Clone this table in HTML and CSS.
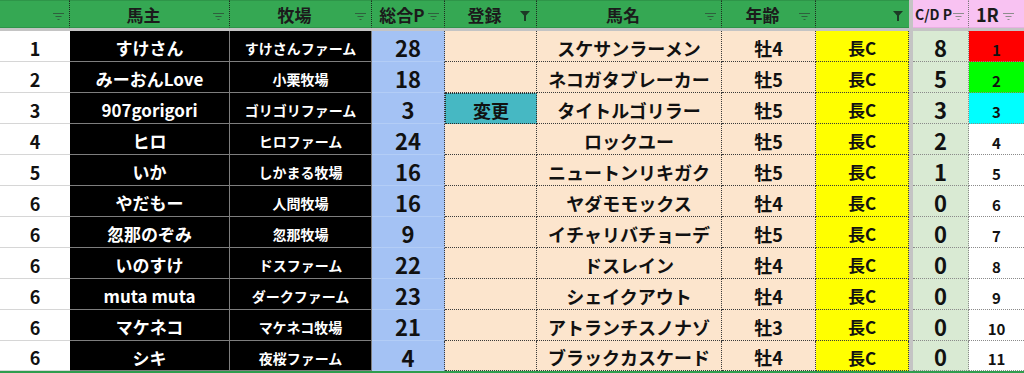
FILE: index.html
```html
<!DOCTYPE html>
<html lang="ja">
<head>
<meta charset="utf-8">
<title>Sheet</title>
<link rel="stylesheet" href="styles.css">
</head>
<body>
<div class="sheet">
  <div class="freeze-col"></div>
  <div class="freeze-row"></div>

  <div class="hd hd-a"><span class="lbl"></span><svg class="flt" width="11" height="7" viewBox="0 0 11 7"><path d="M0 .5h11M2.5 3.5h6M4.5 6.5h2" stroke="#2f5f3d"/></svg></div>
  <div class="hd"><span class="lbl">馬主</span><svg class="flt" width="11" height="7" viewBox="0 0 11 7"><path d="M0 .5h11M2.5 3.5h6M4.5 6.5h2" stroke="#2f5f3d"/></svg></div>
  <div class="hd"><span class="lbl">牧場</span><svg class="flt" width="11" height="7" viewBox="0 0 11 7"><path d="M0 .5h11M2.5 3.5h6M4.5 6.5h2" stroke="#2f5f3d"/></svg></div>
  <div class="hd hd-d"><span class="lbl">総合P</span><svg class="flt" width="11" height="7" viewBox="0 0 11 7"><path d="M0 .5h11M2.5 3.5h6M4.5 6.5h2" stroke="#2f5f3d"/></svg></div>
  <div class="hd"><span class="lbl">登録</span><svg class="fun" width="10" height="10" viewBox="0 0 10 10"><path d="M0 0h10L6 4.5V10H4V4.5Z" fill="#1c3a25"/></svg></div>
  <div class="hd"><span class="lbl">馬名</span><svg class="flt" width="11" height="7" viewBox="0 0 11 7"><path d="M0 .5h11M2.5 3.5h6M4.5 6.5h2" stroke="#2f5f3d"/></svg></div>
  <div class="hd"><span class="lbl">年齢</span><svg class="flt" width="11" height="7" viewBox="0 0 11 7"><path d="M0 .5h11M2.5 3.5h6M4.5 6.5h2" stroke="#2f5f3d"/></svg></div>
  <div class="hd hd-h"><span class="lbl"></span><svg class="fun" width="10" height="10" viewBox="0 0 10 10"><path d="M0 0h10L6 4.5V10H4V4.5Z" fill="#1c3a25"/></svg></div>
  <div class="hd hd-pink hd-cdp"><span class="lbl">C/D P</span><svg class="flt" width="11" height="7" viewBox="0 0 11 7"><path d="M0 .5h11M2.5 3.5h6M4.5 6.5h2" stroke="#8d8d8d"/></svg></div>
  <div class="hd hd-pink hd-r"><span class="lbl">1R</span><svg class="flt" width="11" height="7" viewBox="0 0 11 7"><path d="M0 .5h11M2.5 3.5h6M4.5 6.5h2" stroke="#8d8d8d"/></svg></div>

  <div class="c a">1</div><div class="c b">すけさん</div><div class="c k">すけさんファーム</div><div class="c d">28</div><div class="c e"></div><div class="c f">スケサンラーメン</div><div class="c g">牡4</div><div class="c h">長C</div><div class="c i">8</div><div class="c j red">1</div>
  <div class="c a">2</div><div class="c b">みーおんLove</div><div class="c k">小栗牧場</div><div class="c d">18</div><div class="c e"></div><div class="c f">ネコガタブレーカー</div><div class="c g">牡5</div><div class="c h">長C</div><div class="c i">5</div><div class="c j lime">2</div>
  <div class="c a">3</div><div class="c b">907gorigori</div><div class="c k">ゴリゴリファーム</div><div class="c d">3</div><div class="c e teal">変更</div><div class="c f">タイトルゴリラー</div><div class="c g">牡5</div><div class="c h">長C</div><div class="c i">3</div><div class="c j cyan">3</div>
  <div class="c a">4</div><div class="c b">ヒロ</div><div class="c k">ヒロファーム</div><div class="c d">24</div><div class="c e"></div><div class="c f">ロックユー</div><div class="c g">牡5</div><div class="c h">長C</div><div class="c i">2</div><div class="c j">4</div>
  <div class="c a">5</div><div class="c b">いか</div><div class="c k">しかまる牧場</div><div class="c d">16</div><div class="c e"></div><div class="c f">ニュートンリキガク</div><div class="c g">牡5</div><div class="c h">長C</div><div class="c i">1</div><div class="c j">5</div>
  <div class="c a">6</div><div class="c b">やだもー</div><div class="c k">人問牧場</div><div class="c d">16</div><div class="c e"></div><div class="c f">ヤダモモックス</div><div class="c g">牡4</div><div class="c h">長C</div><div class="c i">0</div><div class="c j">6</div>
  <div class="c a">6</div><div class="c b">忽那のぞみ</div><div class="c k">忽那牧場</div><div class="c d">9</div><div class="c e"></div><div class="c f">イチャリバチョーデ</div><div class="c g">牡5</div><div class="c h">長C</div><div class="c i">0</div><div class="c j">7</div>
  <div class="c a">6</div><div class="c b">いのすけ</div><div class="c k">ドスファーム</div><div class="c d">22</div><div class="c e"></div><div class="c f">ドスレイン</div><div class="c g">牡4</div><div class="c h">長C</div><div class="c i">0</div><div class="c j">8</div>
  <div class="c a">6</div><div class="c b">muta muta</div><div class="c k">ダークファーム</div><div class="c d">23</div><div class="c e"></div><div class="c f">シェイクアウト</div><div class="c g">牡4</div><div class="c h">長C</div><div class="c i">0</div><div class="c j">9</div>
  <div class="c a">6</div><div class="c b">マケネコ</div><div class="c k">マケネコ牧場</div><div class="c d">21</div><div class="c e"></div><div class="c f">アトランチスノナゾ</div><div class="c g">牡3</div><div class="c h">長C</div><div class="c i">0</div><div class="c j">10</div>
  <div class="c a">6</div><div class="c b">シキ</div><div class="c k">夜桜ファーム</div><div class="c d">4</div><div class="c e"></div><div class="c f">ブラックカスケード</div><div class="c g">牡4</div><div class="c h">長C</div><div class="c i">0</div><div class="c j">11</div>
</div>
</body>
</html>
```

FILE: styles.css
```css
html, body {
  margin: 0;
  padding: 0;
  background: #ffffff;
  overflow: hidden;
}

body {
  font-family: "Noto Sans CJK JP", "Noto Sans", sans-serif;
  font-weight: 700;
  color: #111;
}

.sheet {
  display: grid;
  grid-template-columns: 70px 160px 142px 73px 92px 185px 94px 93px 4px 56px 55px;
  grid-template-rows: 28px 3px repeat(10, 31px) 30px;
  width: 1024px;
  height: 371px;
  border-bottom: 2px solid #2f9d4e;
}

.freeze-col {
  grid-column: 9;
  grid-row: 1 / -1;
  background: #c4c4c4;
}

.freeze-row {
  grid-column: 1 / -1;
  grid-row: 2;
  background: #c4c4c4;
}

/* header */
.hd {
  display: flex;
  align-items: center;
  background: #35a853;
  border-top: 1px solid #2e9549;
  border-bottom: 1px solid #2e9549;
  border-right: 1px dotted #1d2a20;
  box-sizing: border-box;
  padding-right: 5px;
  font-size: 17px;
  color: #1b1b1b;
  line-height: 1;
}

.hd .lbl {
  flex: 1;
  text-align: center;
  padding-left: 4px;
}

.hd .flt {
  flex: none;
  margin-top: 4px;
}

.hd .fun {
  flex: none;
  margin-top: 3px;
  margin-right: 1px;
}

.hd-h {
  border-right: none;
}

.hd-pink {
  background: #f8c2f2;
  border-top: 1px solid #f8c2f2;
  border-bottom: 1px solid #e9b0e2;
}

.hd-cdp {
  border-right: 1px dotted #777;
  padding-right: 4px;
}

.hd-cdp .lbl {
  flex: 1;
  text-align: left;
  padding-left: 2px;
  font-size: 14px;
  white-space: nowrap;
}

.hd-r {
  border-right: none;
  padding-right: 10px;
}

.hd-r .lbl {
  text-align: left;
  padding-left: 7px;
  font-size: 18px;
}

/* cells */
.c {
  display: flex;
  align-items: center;
  justify-content: center;
  box-sizing: border-box;
  padding-top: 5px;
  white-space: nowrap;
  line-height: 1.2;
}

.a {
  background: #ffffff;
  border-bottom: 1px solid #d6d6d6;
  font-size: 18px;
  color: #111;
}

.b, .k {
  background: #000000;
  color: #ffffff;
  border-bottom: 1px solid #7e7e7e;
  border-right: 1px solid #7e7e7e;
}

.b {
  font-size: 17px;
}

.k {
  font-size: 14px;
}

.d {
  background: #a4c2f4;
  border-bottom: 1px solid #b3cdf6;
  border-right: 1px dotted #3a3a3a;
  font-size: 22px;
  padding-top: 3px;
  line-height: 1.1;
}

.e, .f, .g {
  background: #fce5cd;
  border-bottom: 1px dotted #3a3a3a;
  border-right: 1px dotted #3a3a3a;
  font-size: 18px;
}

.teal {
  background: #46b8c3;
  border: 1px dotted #2a2a2a;
}

.h {
  background: #ffff00;
  border-bottom: 1px dotted #3a3a3a;
  border-right: 1px dotted #3a3a3a;
  font-size: 17px;
}

.i {
  background: #d9ead3;
  border-bottom: 1px dotted #8a8a8a;
  border-right: 1px dotted #8a8a8a;
  font-size: 22px;
  padding-top: 1px;
  line-height: 1;
}

.j {
  background: #ffffff;
  border-bottom: 1px dotted #8a8a8a;
  font-size: 15px;
  padding-top: 7px;
}

.red { background: #ff0000; }
.lime { background: #00ff00; }
.cyan { background: #00ffff; }
```
